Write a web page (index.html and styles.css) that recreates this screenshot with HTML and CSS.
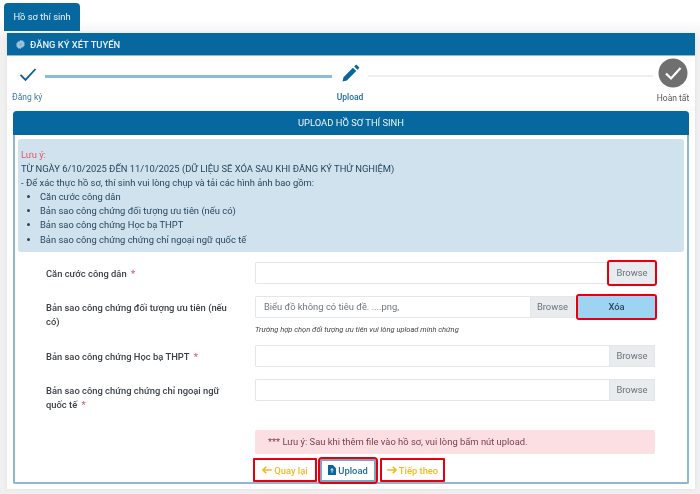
FILE: index.html
```html
<!DOCTYPE html>
<html lang="vi">
<head>
<meta charset="utf-8">
<title>Hồ sơ thí sinh</title>
<link rel="stylesheet" href="styles.css">
</head>
<body>
<div class="tabs"><div class="tab">Hồ sơ thí sinh</div></div>
<div class="page">
  <div class="title-bar">
    <svg class="gear" viewBox="0 0 12 12"><path d="M6 0l1.600 1 1.900-.2.600 1.800 1.600 1-.6 1.800.6 1.800-1.600 1-.6 1.800-1.900-.2L6 12l-1.600-1-1.900.2-.6-1.800-1.600-1 .6-1.800L.3 4.600l1.600-1 .6-1.800 1.900.2z" fill="#9fc3d8"/><circle cx="6" cy="6" r="1.800" fill="#7fb0cc"/></svg>
    <span>ĐĂNG KÝ XÉT TUYỂN</span>
  </div>
  <div class="stepper">
    <div class="step step-first">
      <svg class="step-icon" viewBox="0 0 24 24"><path d="M3 13l6 6L21 6" fill="none" stroke="#0a5f94" stroke-width="2.200"/></svg>
      <div class="step-label">Đăng ký</div>
    </div>
    <div class="line line-done"></div>
    <div class="step step-mid">
      <svg class="step-icon" viewBox="0 0 24 24"><path d="M3 21l1.200-5.200L15.500 4.500l4 4L8.200 19.800zM17 3l1.800-1.800a1 1 0 0 1 1.400 0l2.600 2.600a1 1 0 0 1 0 1.400L21 7z" fill="#0a659c"/></svg>
      <div class="step-label step-bold">Upload</div>
    </div>
    <div class="line"></div>
    <div class="step step-last">
      <svg class="step-circle" viewBox="0 0 30 30"><circle cx="15" cy="15" r="14.500" fill="#6f6f6f"/><path d="M8 15.500l5 5L22.500 10" fill="none" stroke="#fff" stroke-width="2.200"/></svg>
      <div class="step-label step-gray">Hoàn tất</div>
    </div>
  </div>
  <section class="card">
    <h2 class="card-head">UPLOAD HỒ SƠ THÍ SINH</h2>
    <div class="notice">
      <div class="notice-red">Lưu ý:</div>
      <div>TỪ NGÀY 6/10/2025 ĐẾN 11/10/2025 (DỮ LIỆU SẼ XÓA SAU KHI ĐĂNG KÝ THỬ NGHIỆM)</div>
      <div>- Để xác thực hồ sơ, thí sinh vui lòng chụp và tải các hình ảnh bao gồm:</div>
      <ul>
        <li>Căn cước công dân</li>
        <li>Bản sao công chứng đối tượng ưu tiên (nếu có)</li>
        <li>Bản sao công chứng Học bạ THPT</li>
        <li>Bản sao công chứng chứng chỉ ngoại ngữ quốc tế</li>
      </ul>
    </div>
    <div class="form">
      <div class="row">
        <div class="label">Căn cước công dân <span class="req">*</span></div>
        <div class="field">
          <div class="file">
            <div class="file-name"></div>
            <div class="browse marked">Browse</div>
          </div>
        </div>
      </div>
      <div class="row">
        <div class="label">Bản sao công chứng đối tượng ưu tiên (nếu có)</div>
        <div class="field">
          <div class="file">
            <div class="file-name filled">Biểu đồ không có tiêu đề. ....png,</div>
            <div class="browse browse-short">Browse</div>
            <div class="delete">Xóa</div>
          </div>
          <div class="hint">Trường hợp chọn đối tượng ưu tiên vui lòng upload minh chứng</div>
        </div>
      </div>
      <div class="row">
        <div class="label">Bản sao công chứng Học bạ THPT <span class="req">*</span></div>
        <div class="field">
          <div class="file">
            <div class="file-name"></div>
            <div class="browse">Browse</div>
          </div>
        </div>
      </div>
      <div class="row">
        <div class="label">Bản sao công chứng chứng chỉ ngoại ngữ quốc tế <span class="req">*</span></div>
        <div class="field">
          <div class="file">
            <div class="file-name"></div>
            <div class="browse">Browse</div>
          </div>
        </div>
      </div>
    </div>
    <div class="footer">
      <div class="alert">*** Lưu ý: Sau khi thêm file vào hồ sơ, vui lòng bấm nút upload.</div>
      <div class="actions">
        <button class="btn btn-warn">
          <svg class="btn-icon" viewBox="0 0 12 10"><path d="M5 1L1 5l4 4M1 5h11" fill="none" stroke="#f5b921" stroke-width="2"/></svg>Quay lại
        </button>
        <button class="btn btn-upload">
          <svg class="btn-icon-file" viewBox="0 0 9 11"><path d="M0 0h5.500L9 3.500V11H0z" fill="#0a659c"/><path d="M4.500 4v4.500M2.800 5.800l1.700-1.800 1.700 1.800" fill="none" stroke="#fff"/></svg>Upload
        </button>
        <button class="btn btn-warn btn-next">
          <svg class="btn-icon" viewBox="0 0 12 10"><path d="M7 1l4 4-4 4M11 5H0" fill="none" stroke="#f5b921" stroke-width="2"/></svg>Tiếp theo
        </button>
      </div>
    </div>
  </section>
</div>
</body>
</html>
```
FILE: styles.css
```css
* { box-sizing: border-box; }
html, body { margin: 0; padding: 0; }
body {
  width: 700px;
  height: 494px;
  overflow: hidden;
  background: linear-gradient(#ffffff 0, #ffffff 20px, #f0f0f0 40px);
  font-family: Roboto, "Liberation Sans", sans-serif;
  font-size: 9.400px;
  color: #333;
  filter: blur(0.3px);
}
.tabs { padding: 3px 0 0 4px; height: 33px; }
.tab {
  width: 76px;
  height: 28px;
  background: #06689f;
  border-radius: 4px 4px 0 0;
  color: #eef5f9;
  font-size: 9.400px;
  line-height: 28px;
  text-align: center;
}
.page {
  margin: 0 5px 0 7px;
  height: 456px;
  background: #fff;
  box-shadow: 0 0 4px rgba(0,0,0,.08);
}
.title-bar {
  height: 23px;
  background: #06689f;
  color: #e6f0f6;
  font-size: 9.400px;
  font-weight: 500;
  display: flex;
  align-items: center;
  gap: 5px;
  padding-left: 9px;
  border-bottom: 1px solid #8cbad5;
}
.gear { width: 9px; height: 9px; }
.stepper {
  display: flex;
  align-items: flex-start;
  height: 55px;
  padding: 2px 4px 0 5px;
  background: linear-gradient(#fff 48px, #f8f8f8);
}
.step {
  display: flex;
  flex-direction: column;
  align-items: center;
  flex: none;
  height: 50px;
}
.step-first { width: 33px; align-items: flex-start; }
.step-first .step-icon { margin-left: 6px; }
.step-mid { width: 36px; }
.step-last { width: 36px; margin-left: 2px; }
.step-icon { width: 20px; height: 20px; margin-top: 6px; flex: none; }
.step-circle { width: 30px; height: 30px; flex: none; }
.step-label {
  font-size: 8.500px;
  color: #3f7ba1;
  margin-top: 8px;
  line-height: 11px;
  white-space: nowrap;
}
.step-circle + .step-label { margin-top: 5px; color: #555; }
.step-bold { font-weight: 500; color: #1d6c9f; }
.line {
  flex: 1;
  height: 2px;
  margin-top: 17px;
  background: #eeeeee;
}
.line-done { background: #8cbcd9; height: 3px; flex: none; width: 287px; }
.card {
  margin: 0 6px;
  height: 373px;
  background: #fff;
  border: 2px solid #8fb8d0;
  border-top: 0;
  border-radius: 4px 4px 2px 2px;
  display: flex;
  flex-direction: column;
}
.card-head {
  margin: 0 -2px;
  height: 24px;
  background: #06689f;
  color: #eef5f9;
  font-size: 9.400px;
  font-weight: 400;
  line-height: 24px;
  text-align: center;
  border-radius: 4px 4px 0 0;
}
.notice {
  margin: 4px 3px 0;
  height: 114px;
  padding: 9px 3px 0;
  background: #cfe2ee;
  border-radius: 3px;
  color: #27465d;
  font-size: 9.400px;
  line-height: 14.100px;
}
.notice-red { color: #e0566a; }
.notice ul { margin: 0; padding: 0 0 0 19px; }
.form {
  display: flex;
  flex-direction: column;
  padding: 10px 32px 0 31px;
}
.row {
  display: grid;
  grid-template-columns: 209px 400px;
  margin-bottom: 12px;
}
.label {
  font-size: 9.400px;
  font-weight: 500;
  line-height: 14px;
  padding: 5px 24px 0 0;
  color: #3a3f44;
}
.req { color: #e0566a; margin-left: 2px; }
.file {
  display: flex;
  height: 22px;
  border-radius: 2px;
}
.file-name {
  flex: 1;
  background: #fff;
  border: 1px solid #e4e7ea;
  border-right: 0;
  border-radius: 2px 0 0 2px;
  font-size: 9.400px;
  line-height: 20px;
  padding-left: 8px;
}
.filled { color: #6f767c; }
.browse {
  width: 46px;
  background: #e9ecef;
  border: 1px solid #e4e7ea;
  color: #6a7177;
  font-size: 9.400px;
  line-height: 20px;
  text-align: center;
}
.browse-short { width: 45px; }
.marked { outline: 2px solid #e6000f; border-radius: 1px; }
.delete {
  width: 77px;
  margin-left: 3px;
  background: #9fd3f2;
  outline: 2px solid #e6000f;
  color: #2a4a5e;
  font-size: 9.400px;
  font-weight: 500;
  line-height: 22px;
  text-align: center;
  border-radius: 1px;
}
.hint {
  margin-top: 7px;
  margin-bottom: -2px;
  font-size: 7.500px;
  font-style: italic;
  line-height: 10px;
  color: #444;
}
.footer {
  margin-top: 6px;
  margin-left: 240px;
  width: 400px;
}
.alert {
  height: 24px;
  background: #fcdfe3;
  border-radius: 2px;
  color: #7a3f48;
  font-size: 9.400px;
  line-height: 24px;
  padding-left: 13px;
}
.actions {
  display: flex;
  align-items: center;
  gap: 3px;
  margin: 4px 0 0 -2px;
}
.btn {
  height: 24px;
  padding: 0;
  background: #fff;
  font-family: inherit;
  font-size: 9.400px;
  font-weight: 500;
  display: flex;
  align-items: center;
  justify-content: center;
  gap: 2px;
  cursor: pointer;
}
.btn-warn {
  width: 64px;
  color: #f5b921;
  border: 2px solid #e6000f;
  border-radius: 1px;
}
.btn-next { width: 65px; margin-left: 1px; }
.btn-upload {
  width: 56px;
  height: 23px;
  color: #1d6c9f;
  border: 2px solid #7aa6c2;
  border-radius: 2px;
  outline: 2px solid #e6000f;
}
.btn-icon { width: 10px; height: 8px; }
.btn-icon-file { width: 8px; height: 10px; }
```
